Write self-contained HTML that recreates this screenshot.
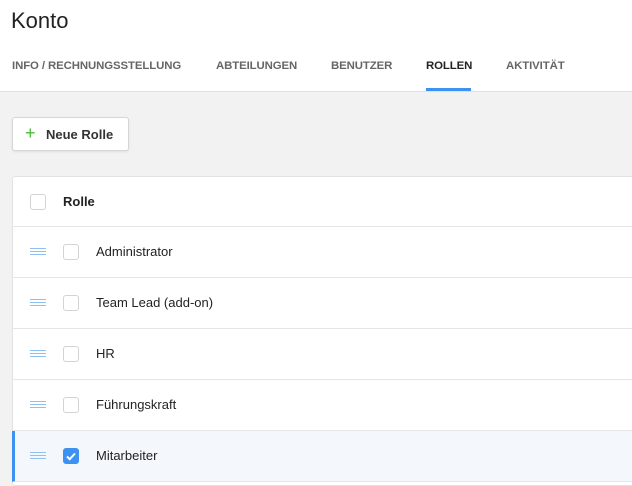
<!DOCTYPE html>
<html><head><style>
*{margin:0;padding:0;box-sizing:border-box}
body{width:632px;height:478px;overflow:hidden;background:#f2f2f2;font-family:"Liberation Sans",sans-serif;position:relative}
.hdr{position:absolute;left:0;top:0;width:632px;height:92px;background:#fff;border-bottom:1px solid #e0e0e0}
h1{position:absolute;left:11px;top:8px;font-size:22px;font-weight:normal;color:#222}
.tab{position:absolute;top:60px;font-size:11.4px;font-weight:bold;color:#666;letter-spacing:-0.1px}
.tab.act{color:#222}
.ul{position:absolute;left:426px;top:88px;width:45px;height:3px;background:#3d91f0}
.btn{position:absolute;left:12px;top:117px;width:117px;height:34px;background:#fff;border:1px solid #d6d6d6;border-radius:3px;box-shadow:0 1px 2px rgba(0,0,0,.08);font-size:13px;font-weight:bold;color:#333}
.btn .p{position:absolute;left:12px;top:5px;color:#4cbb3a;font-size:18px;font-weight:normal}
.btn .t{position:absolute;left:33px;top:9px}
.card{position:absolute;left:12px;top:176px;width:630px;height:310px;background:#fff;border:1px solid #e2e2e2;border-radius:3px}
.row{position:absolute;left:0;width:630px;height:51px;border-bottom:1px solid #e6e6e6}
.cb{position:absolute;width:16px;height:16px;border:1px solid #d3d3d3;border-radius:3px;background:#fff}
.cb.on{background:#3d91f0;border-color:#3d91f0}
.drag{position:absolute;left:17px;top:21px;width:16px;height:7px;border-top:1px solid #8dc1f5;border-bottom:1px solid #8dc1f5}
.drag:after{content:"";position:absolute;left:0;top:2px;width:16px;height:1px;background:#8dc1f5}
.lbl{position:absolute;left:83px;top:17px;font-size:13px;color:#222}
</style></head><body>
<div class="hdr">
<h1>Konto</h1>
<div class="tab" style="left:12px">INFO / RECHNUNGSSTELLUNG</div>
<div class="tab" style="left:216px">ABTEILUNGEN</div>
<div class="tab" style="left:331px">BENUTZER</div>
<div class="tab act" style="left:426px">ROLLEN</div>
<div class="tab" style="left:506px">AKTIVITÄT</div>
<div class="ul"></div>
</div>
<div class="btn"><span class="p">+</span><span class="t">Neue Rolle</span></div>
<div class="card">
<div class="row" style="top:0;height:50px"><div class="cb" style="left:17px;top:17px"></div><div class="lbl" style="left:50px;font-weight:bold;top:17px">Rolle</div></div>
<div class="row" style="top:50px"><div class="drag"></div><div class="cb" style="left:50px;top:17px"></div><div class="lbl">Administrator</div></div>
<div class="row" style="top:101px"><div class="drag"></div><div class="cb" style="left:50px;top:17px"></div><div class="lbl">Team Lead (add-on)</div></div>
<div class="row" style="top:152px"><div class="drag"></div><div class="cb" style="left:50px;top:17px"></div><div class="lbl">HR</div></div>
<div class="row" style="top:203px"><div class="drag"></div><div class="cb" style="left:50px;top:17px"></div><div class="lbl">Führungskraft</div></div>
<div class="row" style="top:254px;background:#f4f8fd;border-left:3px solid #3d91f0;left:-1px"><div class="drag" style="left:15px"></div><div class="cb on" style="left:48px;top:17px"><svg width="14" height="14" viewBox="0 0 14 14" style="position:absolute;left:0;top:0"><path d="M3 7.5l2.7 2.7L11 4.5" stroke="#fff" stroke-width="2" fill="none"/></svg></div><div class="lbl" style="left:81px">Mitarbeiter</div></div>
</div>
</body></html>
